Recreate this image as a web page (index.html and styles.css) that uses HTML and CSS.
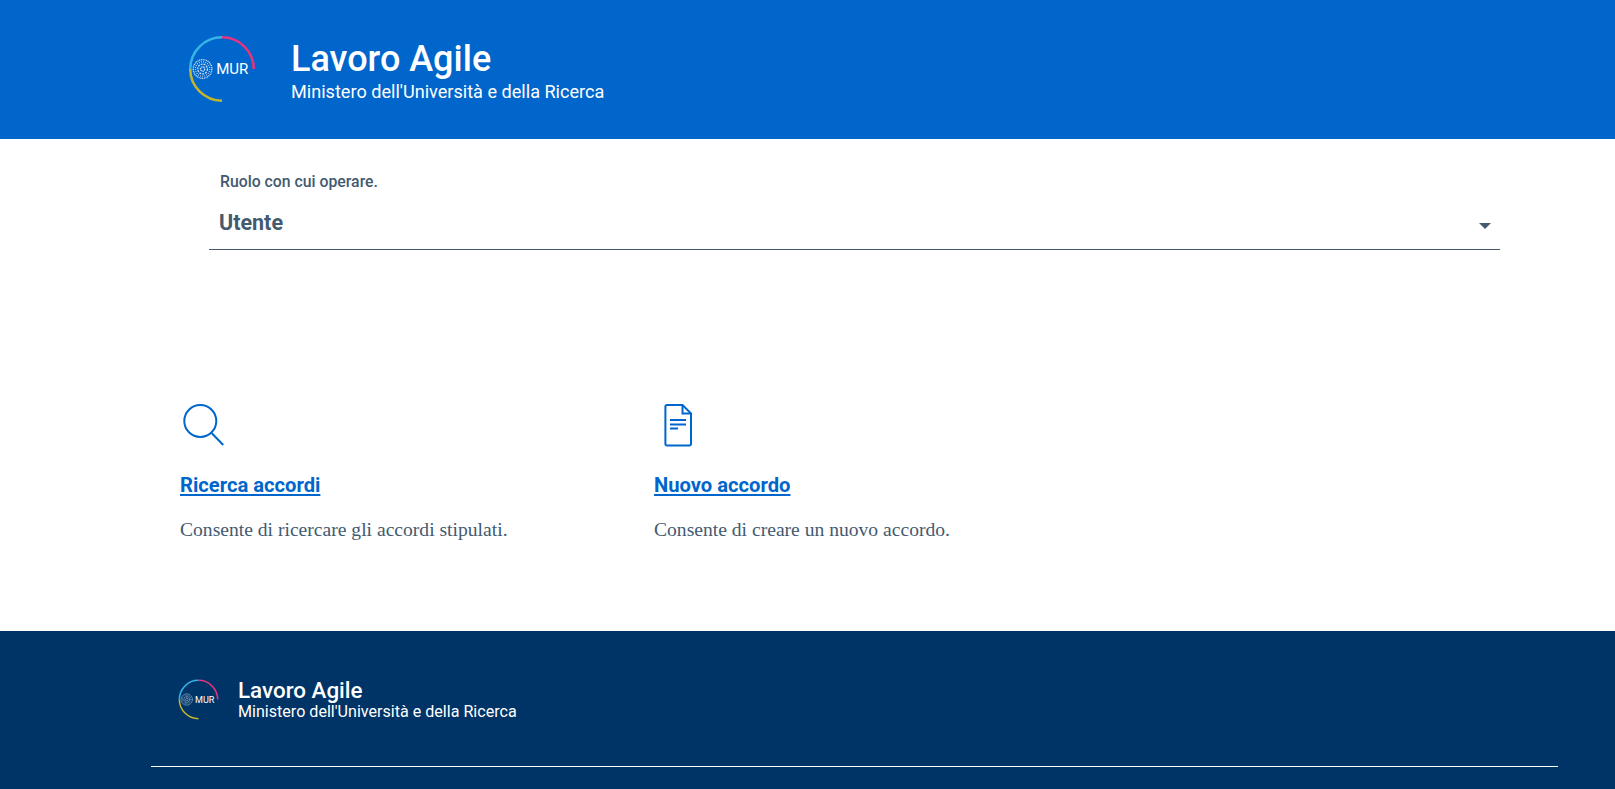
FILE: index.html
```html
<!DOCTYPE html>
<html lang="it">
<head>
  <meta charset="UTF-8">
  <meta name="viewport" content="width=device-width, initial-scale=1.0">
  <title>Lavoro Agile</title>
  <link rel="stylesheet" href="styles.css">
</head>
<body>
  <header class="site-header">
    <svg class="logo" viewBox="0 0 70 70">
      <path d="M2.3 35A32.7 32.7 0 0 1 35 2.3" fill="none" stroke="#36b4e6" stroke-width="2.6"/>
      <path d="M35 2.3A32.7 32.7 0 0 1 67.7 35" fill="none" stroke="#e6347e" stroke-width="2.6"/>
      <path d="M2.3 35A32.7 32.7 0 0 0 35 67.7" fill="none" stroke="#c3b52c" stroke-width="2.6"/>
      <circle cx="15" cy="35" r="9.6" fill="none" stroke="#cfe2f6" stroke-width="1.3" stroke-dasharray="1.1 .7"/>
      <circle cx="15" cy="35" r="7.400" fill="none" stroke="#cfe2f6" stroke-width="1.2" stroke-dasharray=".9 1.300"/>
      <circle cx="15" cy="35" r="5" fill="none" stroke="#cfe2f6" stroke-width="1.3" stroke-dasharray="2 1"/>
      <circle cx="15" cy="35" r="2.200" fill="none" stroke="#cfe2f6" stroke-width="1.4" stroke-dasharray="1.4 .6"/>
      <text x="29" y="40.500" class="logo-text">MUR</text>
    </svg>
    <div class="brand">
      <div class="brand-title">Lavoro Agile</div>
      <div class="brand-sub">Ministero dell'Università e della Ricerca</div>
    </div>
  </header>

  <main class="content">
    <div class="role-field">
      <label class="role-label">Ruolo con cui operare.</label>
      <div class="role-select">
        <span>Utente</span>
        <span class="caret"></span>
      </div>
    </div>

    <div class="cards">
      <div class="card">
        <svg class="card-icon" viewBox="0 0 48 48">
          <circle cx="20.3" cy="20" r="16" fill="none" stroke="#0066cc" stroke-width="2"/>
          <path d="M31.6 32l11.6 12" fill="none" stroke="#0066cc" stroke-width="2"/>
        </svg>
        <h3><a href="#">Ricerca accordi</a></h3>
        <p>Consente di ricercare gli accordi stipulati.</p>
      </div>
      <div class="card">
        <svg class="card-icon" viewBox="0 0 48 48">
          <path d="M13 4h15.500L37 12.500V43a1.600 1.600 0 0 1-1.600 1.600H13A1.600 1.600 0 0 1 11.400 43V5.600A1.600 1.600 0 0 1 13 4z" fill="none" stroke="#0066cc" stroke-width="2"/>
          <path d="M28.500 4v8.500H37" fill="none" stroke="#0066cc" stroke-width="2"/>
          <path d="M16 19h16M16 23.500h16M16 27.500h8" fill="none" stroke="#0066cc" stroke-width="2"/>
        </svg>
        <h3><a href="#">Nuovo accordo</a></h3>
        <p>Consente di creare un nuovo accordo.</p>
      </div>
    </div>
  </main>

  <footer class="site-footer">
    <div class="footer-brand">
      <svg class="logo-small" viewBox="0 0 70 70">
        <path d="M2.3 35A32.7 32.7 0 0 1 35 2.3" fill="none" stroke="#36b4e6" stroke-width="2.6"/>
        <path d="M35 2.3A32.7 32.7 0 0 1 67.7 35" fill="none" stroke="#e6347e" stroke-width="2.6"/>
        <path d="M2.3 35A32.7 32.7 0 0 0 35 67.7" fill="none" stroke="#c3b52c" stroke-width="2.6"/>
        <circle cx="15" cy="35" r="9.6" fill="none" stroke="#cfe2f6" stroke-width="1.3" stroke-dasharray="1.1 .7"/>
        <circle cx="15" cy="35" r="7.400" fill="none" stroke="#cfe2f6" stroke-width="1.2" stroke-dasharray=".9 1.300"/>
        <circle cx="15" cy="35" r="5" fill="none" stroke="#cfe2f6" stroke-width="1.3" stroke-dasharray="2 1"/>
        <circle cx="15" cy="35" r="2.200" fill="none" stroke="#cfe2f6" stroke-width="1.4" stroke-dasharray="1.4 .6"/>
        <text x="29" y="40.500" class="logo-text">MUR</text>
      </svg>
      <div>
        <div class="footer-title">Lavoro Agile</div>
        <div class="footer-sub">Ministero dell'Università e della Ricerca</div>
      </div>
    </div>
    <hr class="footer-line">
  </footer>
</body>
</html>
```

FILE: styles.css
```css
* {
  margin: 0;
  padding: 0;
  box-sizing: border-box;
}
body {
  font-family: Roboto, 'Noto Sans', Arial, sans-serif;
  background: #ffffff;
  color: #435a70;
  display: flex;
  flex-direction: column;
  min-height: 100vh;
  overflow: hidden;
}
.logo-text {
  font-family: Roboto, sans-serif;
  font-size: 15.500px;
  fill: #ffffff;
}
.site-header {
  background: #0066cc;
  color: #ffffff;
  height: 139px;
  padding: 35px 0 0 188px;
  display: flex;
}
.logo {
  width: 68px;
  height: 68px;
}
.brand {
  margin-left: 35px;
  margin-top: 2px;
}
.brand-title {
  font-size: 36px;
  font-weight: 500;
  line-height: 44px;
}
.brand-sub {
  font-size: 18.1px;
  line-height: 22px;
}
.content {
  padding: 33px 0 0 180px;
  height: 492px;
}
.role-field {
  margin-left: 29px;
  width: 1291px;
}
.role-label {
  display: block;
  font-size: 15.800px;
  font-weight: 500;
  line-height: 20px;
  margin-left: 11px;
}
.role-select {
  display: flex;
  justify-content: space-between;
  align-items: center;
  border-bottom: 1px solid #435a70;
  height: 58px;
  padding: 4px 9px 0 10px;
  font-size: 21.5px;
  font-weight: 700;
}
.caret {
  width: 0;
  height: 0;
  border-left: 6px solid transparent;
  border-right: 6px solid transparent;
  border-top: 6px solid #435a70;
  margin-top: 7px;
}
.cards {
  display: flex;
  margin-top: 151px;
}
.card {
  width: 474px;
}
.card-icon {
  display: block;
  width: 48px;
  height: 48px;
}
.card h3 {
  font-size: 20.2px;
  font-weight: 700;
  line-height: 28px;
  margin-top: 22px;
}
.card a {
  color: #0066cc;
}
.card p {
  font-family: 'Liberation Serif', serif;
  font-size: 19.6px;
  line-height: 28px;
  margin-top: 17px;
}
.site-footer {
  background: #003366;
  color: #ffffff;
  flex: 1;
  padding: 48px 57px 0 151px;
}
.footer-brand {
  display: flex;
  margin-left: 27px;
}
.logo-small {
  width: 41px;
  height: 41px;
}
.footer-brand > div {
  margin-left: 19px;
  margin-top: -1px;
}
.footer-title {
  font-size: 22.4px;
  font-weight: 500;
  line-height: 25px;
}
.footer-sub {
  font-size: 16.1px;
  line-height: 18px;
}
.footer-line {
  border: none;
  border-top: 1px solid #ffffff;
  margin-top: 45px;
}
```
